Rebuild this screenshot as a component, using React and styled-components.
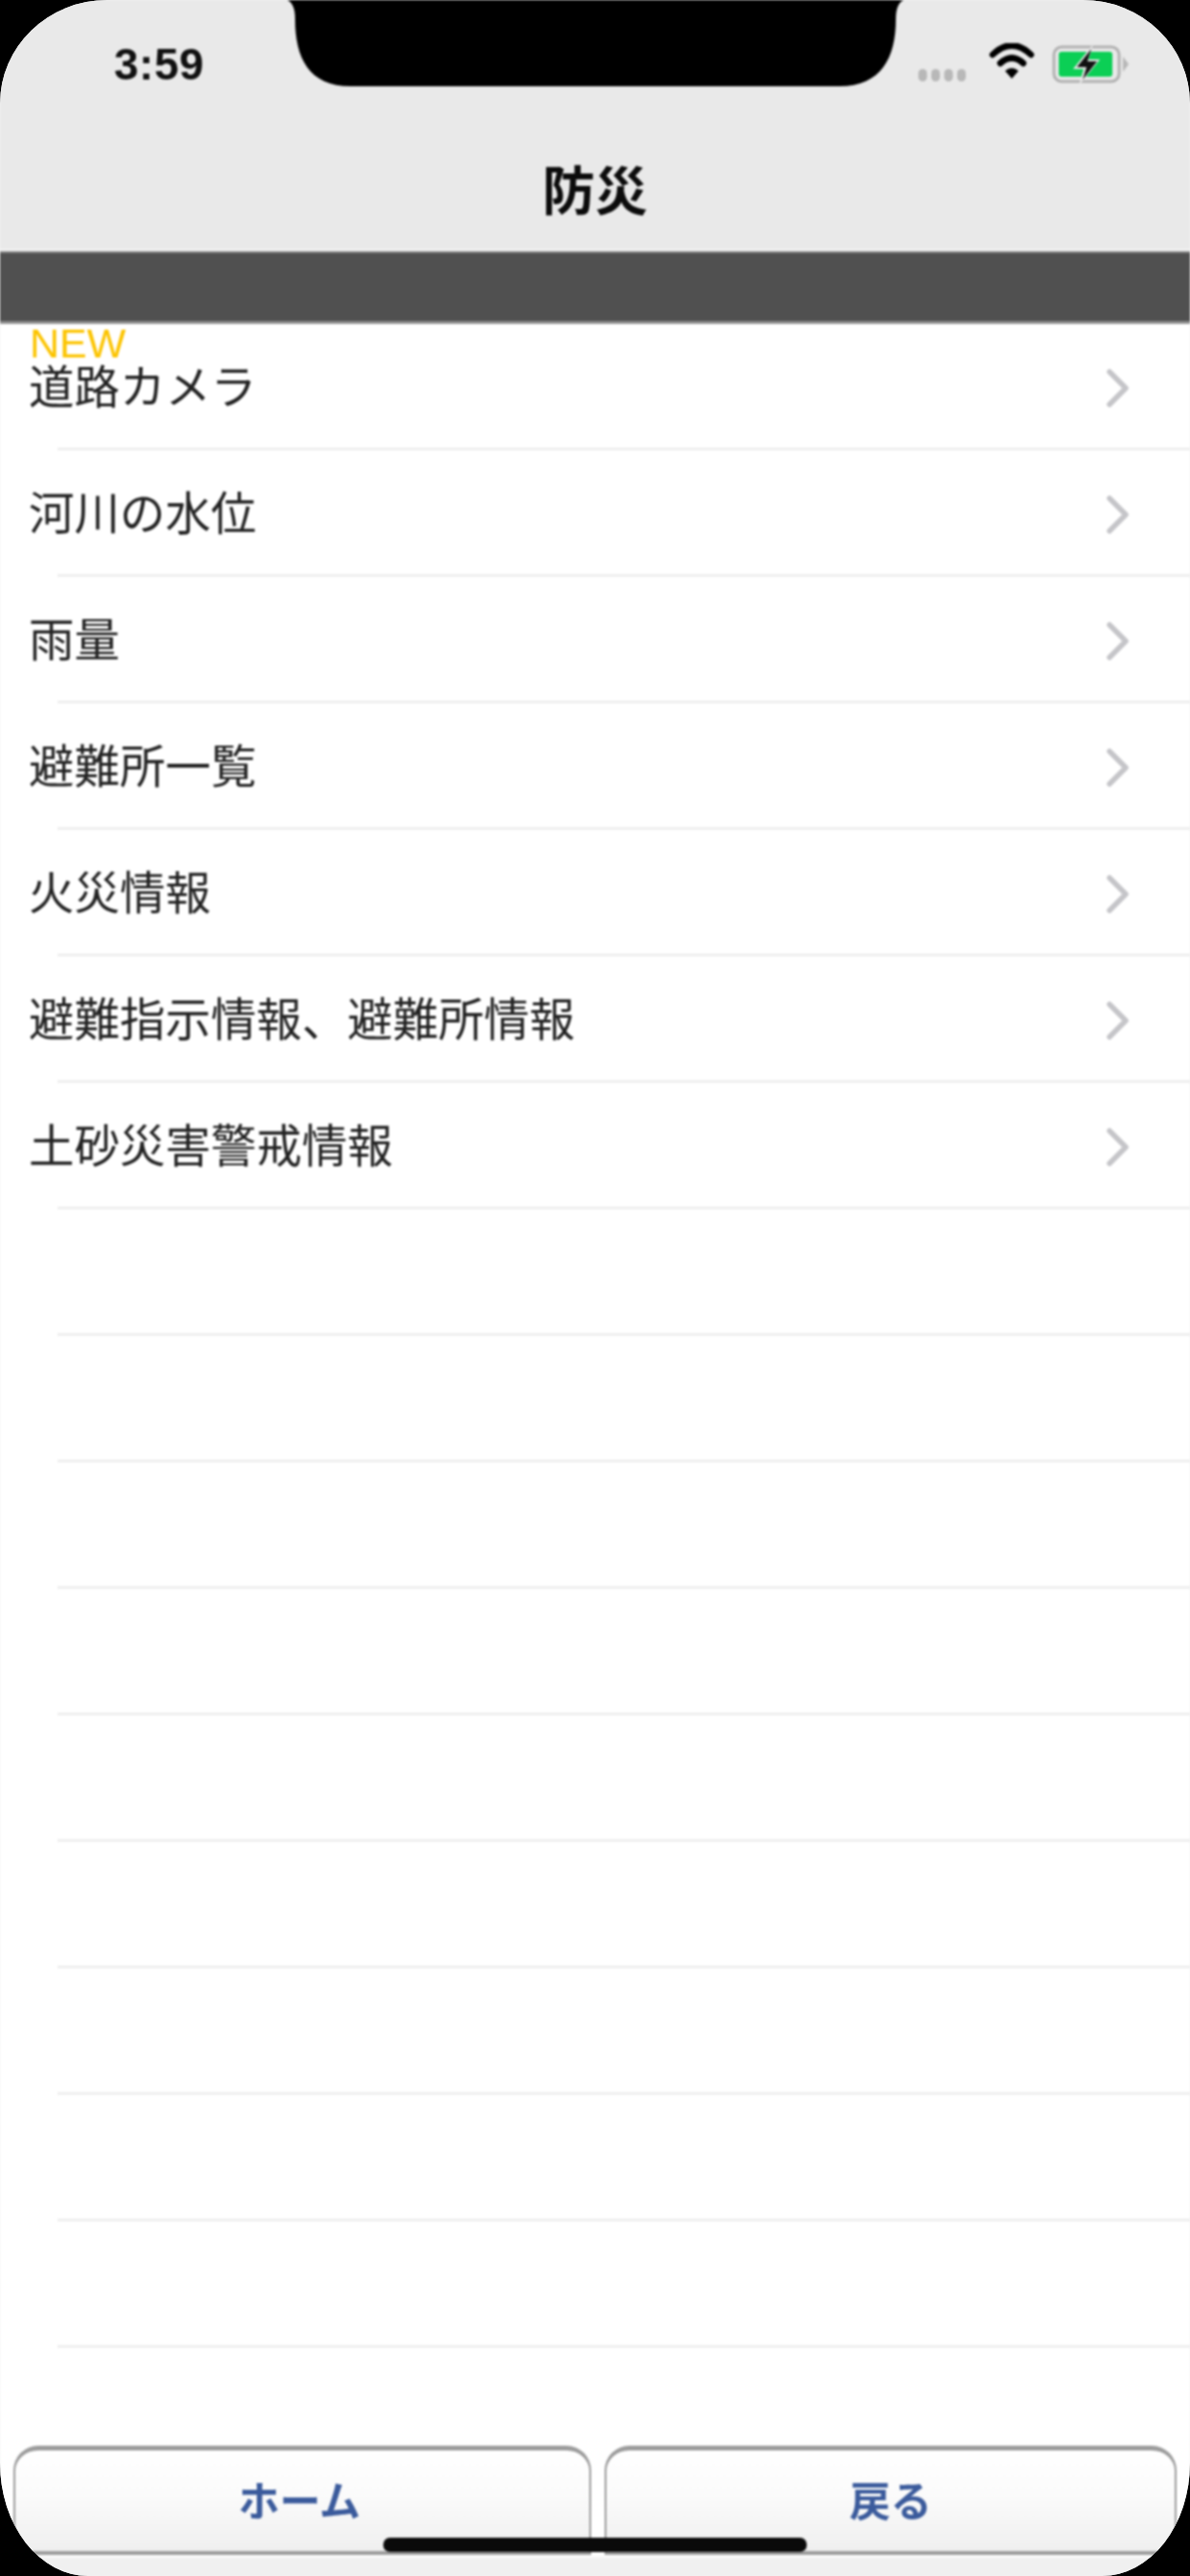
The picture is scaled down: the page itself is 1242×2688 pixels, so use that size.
import React from "react";
import styled, { createGlobalStyle } from "styled-components";

const Global = createGlobalStyle`
  html, body { margin: 0; padding: 0; background: #000; }
  body { width: 1242px; height: 2688px; overflow: hidden; }
`;

const JP = `"Liberation Sans", "Noto Sans CJK JP", sans-serif`;

const Device = styled.div`
  position: relative;
  width: 1242px;
  height: 2688px;
  background: #000;
  overflow: hidden;
`;

const Screen = styled.div`
  width: 100%;
  height: 100%;
  background: #f4f4f4;
  overflow: hidden;
  border-radius: 112px 112px 92px 92px / 108px 108px 118px 118px;
`;

const Content = styled.div`
  width: 100%;
  height: 100%;
  display: flex;
  flex-direction: column;
  background: #fff;
  filter: blur(0.9px);
  font-family: ${JP};
`;

const NavBar = styled.header`
  flex: 0 0 262px;
  box-sizing: border-box;
  background: #e9e9e9;
  border-bottom: 2px solid #f6f6f6;
  display: flex;
  flex-direction: column;
`;

const StatusBar = styled.div`
  height: 90px;
  box-sizing: border-box;
  padding: 45px 64px 0 119px;
  display: flex;
  justify-content: space-between;
  align-items: flex-start;
`;

const Time = styled.span`
  font-family: "Liberation Sans", sans-serif;
  font-size: 46px;
  line-height: 44px;
  font-weight: 700;
  color: #111;
  letter-spacing: 0.5px;
`;

const StatusIcons = styled.svg`
  display: block;
`;

const NavTitle = styled.h1`
  flex: 1;
  margin: 0;
  padding-top: 40px;
  display: flex;
  align-items: center;
  justify-content: center;
  font-size: 55px;
  font-weight: 700;
  color: #0c0c0c;
`;

const DarkBar = styled.div`
  flex: 0 0 76px;
  box-sizing: border-box;
  background: #505050;
  border-top: 2px solid #8d8d8d;
  border-bottom: 3px solid #8f8f8f;
`;

const List = styled.ul`
  position: relative;
  flex: 1;
  list-style: none;
  margin: 0;
  padding: 0;
`;

const Row = styled.li`
  height: 132px;
  display: flex;
  align-items: center;
  position: relative;
  padding: 2px 62px 0 30px;
  box-sizing: border-box;
  justify-content: space-between;
  &::after {
    content: "";
    position: absolute;
    left: 60px;
    right: 0;
    bottom: 0;
    height: 3px;
    background: #efefef;
  }
`;

const RowLabel = styled.span`
  font-size: 47.5px;
  line-height: 60px;
  color: #222;
`;

const NewBadge = styled.span`
  position: absolute;
  left: 31px;
  top: 0;
  font-family: "Liberation Sans", sans-serif;
  font-size: 43px;
  line-height: 40px;
  color: #fcc400;
`;

const Footer = styled.footer`
  flex: 0 0 136px;
  display: flex;
  flex-direction: column;
`;

const ButtonRow = styled.div`
  flex: 0 0 114px;
  display: flex;
  gap: 14px;
  box-sizing: border-box;
  padding: 0 14px;
  background: #fff;
`;

const FooterButton = styled.button`
  flex: 1 1 0;
  min-width: 0;
  box-sizing: border-box;
  border: 2px solid #9c9c9c;
  border-top-width: 5px;
  border-bottom-width: 4px;
  border-radius: 26px 26px 0 0;
  background: linear-gradient(#ffffff, #fbfbfb 45%, #efefef);
  font-family: ${JP};
  font-size: 43px;
  font-weight: 700;
  color: #3b5b9c;
  padding: 0 ${(p) => p.$nudge || 0}px 5px 0;
`;

const FooterBase = styled.div`
  flex: 1;
  background: #f0f0f0;
  border-top: 3px solid #fbfbfb;
`;

const NotchShape = styled.svg`
  position: absolute;
  left: 0;
  top: 0;
  filter: blur(0.8px);
`;

const HomeIndicator = styled.div`
  position: absolute;
  left: 400px;
  top: 2648px;
  width: 442px;
  height: 15px;
  border-radius: 7px;
  background: #0a0a0a;
  filter: blur(0.8px);
`;

const Chevron = () => (
  <svg width="26" height="42" viewBox="0 0 26 42" fill="none">
    <path d="M4 4 L21 21 L4 38" stroke="#c5c5c9" strokeWidth="5.5" strokeLinecap="round" strokeLinejoin="round" />
  </svg>
);

const StatusGlyphs = () => (
  <StatusIcons width="222" height="42" viewBox="956 46 222 42">
    {[963, 976.5, 990, 1003.5].map((x) => (
      <rect key={x} x={x - 4.5} y="73" width="9" height="13" rx="4.5" fill="#b8b8b8" />
    ))}
    <path d="M1036 58 Q1056 39 1076 58" fill="none" stroke="#000" strokeWidth="6.5" strokeLinecap="round" />
    <path d="M1044 67 Q1056 56 1068 67" fill="none" stroke="#000" strokeWidth="6.5" strokeLinecap="round" />
    <path d="M1049 75 Q1056 69 1063 75 L1056 83 Z" fill="#000" />
    <rect x="1100" y="50" width="68" height="36" rx="8" fill="none" stroke="#b2b2b2" strokeWidth="3" />
    <path d="M1172 60 L1178 68 L1172 76 Z" fill="#b8b8b8" />
    <rect x="1105" y="55" width="56" height="26" rx="3" fill="#0bcf55" />
    <path d="M1141 47 L1120 73 L1131 73 L1126 90 L1148 63 L1136 63 Z" fill="#e9e9e9" />
    <path d="M1139 52 L1124 71 L1134 71 L1130 84 L1145 65 L1135 65 Z" fill="#111" />
  </StatusIcons>
);

const items = [
  "道路カメラ",
  "河川の水位",
  "雨量",
  "避難所一覧",
  "火災情報",
  "避難指示情報、避難所情報",
  "土砂災害警戒情報",
];
const blanks = Array.from({ length: 9 }, (_, i) => i);

export default function App() {
  return (
    <Device>
      <Global />
      <Screen>
        <Content>
          <NavBar>
            <StatusBar>
              <Time>3:59</Time>
              <StatusGlyphs />
            </StatusBar>
            <NavTitle>防災</NavTitle>
          </NavBar>
          <DarkBar />
          <List>
            {items.map((t, i) => (
              <Row key={t}>
                <RowLabel>{t}</RowLabel>
                <Chevron />
                {i === 0 && <NewBadge>NEW</NewBadge>}
              </Row>
            ))}
            {blanks.map((i) => (
              <Row key={i} />
            ))}
          </List>
          <Footer>
            <ButtonRow>
              <FooterButton $nudge={6}>ホーム</FooterButton>
              <FooterButton>戻る</FooterButton>
            </ButtonRow>
            <FooterBase />
          </Footer>
        </Content>
      </Screen>
      <NotchShape width="1242" height="92" viewBox="0 0 1242 92">
        <path d="M300 0 Q308 4 308 20 C308 60 322 90 366 90 L876 90 C920 90 935 60 935 20 Q935 4 943 0 Z" fill="#000" />
      </NotchShape>
      <HomeIndicator />
    </Device>
  );
}
